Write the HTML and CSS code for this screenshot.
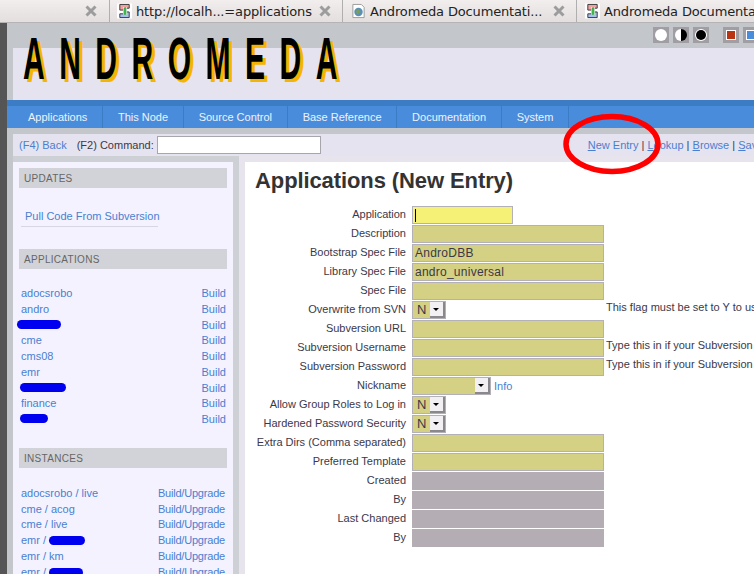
FILE: index.html
```html
<!DOCTYPE html>
<html lang="en">
<head>
    <meta charset="UTF-8">
    <title>Applications (New Entry)</title>
    <link rel="stylesheet" href="styles.css">
</head>
<body>
    <div class="tabstrip">
        <div class="tab tab-first">
            <svg class="tab-close" viewBox="0 0 12 12"><path d="M1.5 1.5l9 9M10.5 1.5l-9 9"/></svg>
        </div>
        <div class="tab tab-app">
            <svg class="favicon" viewBox="0 0 16 16"><rect width="16" height="16" fill="#fff"/><path d="M3 1h10v4H8v2H3z" fill="#f2a0a0" stroke="#333"/><path d="M13 15H3v-4h5V9h5z" fill="#a8c0f0" stroke="#333"/><path d="M7 4v8M10 4v8" fill="none" stroke="#fff"/><rect x="7" y="5" width="3" height="7" fill="#3fb54a"/></svg>
            <span class="tab-title">http://localh...=applications</span>
            <svg class="tab-close" viewBox="0 0 12 12"><path d="M1.5 1.5l9 9M10.5 1.5l-9 9"/></svg>
        </div>
        <div class="tab tab-doc">
            <svg class="favicon" viewBox="0 0 16 16"><path d="M2 1h9l3 3v11H2z" fill="#fff" stroke="#999"/><circle cx="8" cy="9" r="4.5" fill="#5a8fb8"/><path d="M5 8l3-2 2 3-3 3z" fill="#7aa050"/></svg>
            <span class="tab-title">Andromeda Documentati...</span>
            <svg class="tab-close" viewBox="0 0 12 12"><path d="M1.5 1.5l9 9M10.5 1.5l-9 9"/></svg>
        </div>
        <div class="tab tab-last">
            <svg class="favicon" viewBox="0 0 16 16"><rect width="16" height="16" fill="#fff"/><path d="M3 1h10v4H8v2H3z" fill="#f2a0a0" stroke="#333"/><path d="M13 15H3v-4h5V9h5z" fill="#a8c0f0" stroke="#333"/><path d="M7 4v8M10 4v8" fill="none" stroke="#fff"/><rect x="7" y="5" width="3" height="7" fill="#3fb54a"/></svg>
            <span class="tab-title">Andromeda Documenta</span>
        </div>
    </div>

    <div class="pagina">
        <div class="cabecera">
            <div class="franja">
                <span class="muestra"><i class="punto punto-blanco"></i></span>
                <span class="muestra"><i class="punto punto-medio"></i></span>
                <span class="muestra"><i class="punto punto-negro"></i></span>
                <span class="muestra muestra-sep"><i class="cuadro cuadro-rojo"></i></span>
                <span class="muestra"><i class="cuadro cuadro-azul"></i></span>
            </div>
            <div class="logo-fondo"></div>
            <div class="logo">ANDROMEDA</div>
        </div>

        <nav class="menu">
            <a>Applications</a>
            <a>This Node</a>
            <a>Source Control</a>
            <a>Base Reference</a>
            <a>Documentation</a>
            <a>System</a>
        </nav>

        <div class="comandos">
            <a class="enlace">(F4) Back</a>
            <span class="cmd-label">(F2) Command:</span>
            <input class="cmd-input" type="text">
            <div class="acciones">
                <a class="enlace"><u>N</u>ew Entry</a> |
                <a class="enlace"><u>L</u>ookup</a> |
                <a class="enlace"><u>B</u>rowse</a> |
                <a class="enlace"><u>S</u>ave</a>
            </div>
        </div>

        <div class="cuerpo">
            <aside class="lateral">
                <div class="panel">
                    <h3>UPDATES</h3>
                    <div class="pull"><a class="enlace">Pull Code From Subversion</a></div>

                    <h3>APPLICATIONS</h3>
                    <ul class="lista">
                        <li><a class="enlace">adocsrobo</a><a class="enlace">Build</a></li>
                        <li><a class="enlace">andro</a><a class="enlace">Build</a></li>
                        <li><span class="borron borron-a"></span><a class="enlace">Build</a></li>
                        <li><a class="enlace">cme</a><a class="enlace">Build</a></li>
                        <li><a class="enlace">cms08</a><a class="enlace">Build</a></li>
                        <li><a class="enlace">emr</a><a class="enlace">Build</a></li>
                        <li><span class="borron borron-b"></span><a class="enlace">Build</a></li>
                        <li><a class="enlace">finance</a><a class="enlace">Build</a></li>
                        <li><span class="borron borron-c"></span><a class="enlace">Build</a></li>
                    </ul>

                    <h3>INSTANCES</h3>
                    <ul class="lista lista-inst">
                        <li><a class="enlace">adocsrobo / live</a><a class="enlace">Build/Upgrade</a></li>
                        <li><a class="enlace">cme / acog</a><a class="enlace">Build/Upgrade</a></li>
                        <li><a class="enlace">cme / live</a><a class="enlace">Build/Upgrade</a></li>
                        <li><a class="enlace">emr / <span class="borron borron-d"></span></a><a class="enlace">Build/Upgrade</a></li>
                        <li><a class="enlace">emr / km</a><a class="enlace">Build/Upgrade</a></li>
                        <li><a class="enlace">emr / <span class="borron borron-e"></span></a><a class="enlace">Build/Upgrade</a></li>
                    </ul>
                </div>
            </aside>

            <main class="contenido">
                <h1>Applications (New Entry)</h1>
                <form class="ficha">
                    <label>Application</label>
                    <div class="fila"><span class="activo"><input class="campo campo-foco" type="text"><i class="cursor"></i></span></div>

                    <label>Description</label>
                    <div class="fila"><input class="campo" type="text"></div>

                    <label>Bootstrap Spec File</label>
                    <div class="fila"><input class="campo" type="text" value="AndroDBB"></div>

                    <label>Library Spec File</label>
                    <div class="fila"><input class="campo" type="text" value="andro_universal"></div>

                    <label>Spec File</label>
                    <div class="fila"><input class="campo" type="text"></div>

                    <label>Overwrite from SVN</label>
                    <div class="fila">
                        <span class="combo"><span class="combo-valor">N</span><span class="combo-boton"></span></span>
                        <span class="nota nota-sn">This flag must be set to Y to use</span>
                    </div>

                    <label>Subversion URL</label>
                    <div class="fila"><input class="campo" type="text"></div>

                    <label>Subversion Username</label>
                    <div class="fila"><input class="campo" type="text"><span class="nota">Type this in if your Subversion</span></div>

                    <label>Subversion Password</label>
                    <div class="fila"><input class="campo" type="text"><span class="nota">Type this in if your Subversion</span></div>

                    <label>Nickname</label>
                    <div class="fila">
                        <span class="combo combo-ancho"><span class="combo-valor"></span><span class="combo-boton"></span></span>
                        <a class="enlace info">Info</a>
                    </div>

                    <label>Allow Group Roles to Log in</label>
                    <div class="fila"><span class="combo"><span class="combo-valor">N</span><span class="combo-boton"></span></span></div>

                    <label>Hardened Password Security</label>
                    <div class="fila"><span class="combo"><span class="combo-valor">N</span><span class="combo-boton"></span></span></div>

                    <label>Extra Dirs (Comma separated)</label>
                    <div class="fila"><input class="campo" type="text"></div>

                    <label>Preferred Template</label>
                    <div class="fila"><input class="campo" type="text"></div>

                    <label>Created</label>
                    <div class="fila"><input class="campo campo-solo" type="text" readonly></div>

                    <label>By</label>
                    <div class="fila"><input class="campo campo-solo" type="text" readonly></div>

                    <label>Last Changed</label>
                    <div class="fila"><input class="campo campo-solo" type="text" readonly></div>

                    <label>By</label>
                    <div class="fila"><input class="campo campo-solo" type="text" readonly></div>
                </form>
            </main>
        </div>

        <svg class="circulo" viewBox="0 0 100 62"><ellipse cx="50" cy="31" rx="46" ry="27.5" fill="none" stroke="#f00" stroke-width="5.5"/></svg>
    </div>
</body>
</html>
```

FILE: styles.css
```css
html, body {
    margin: 0;
    height: 574px;
    overflow: hidden;
}

body {
    font-family: 'Liberation Sans', Arial, sans-serif;
    font-size: 11px;
    color: #3c3848;
    background: #fff;
}

a {
    text-decoration: none;
}

.enlace {
    color: #4a7fcf;
}

.tabstrip {
    display: flex;
    height: 22px;
    background: linear-gradient(#f2eeee, #e4dede);
    border-bottom: 1px solid #b4b4b4;
    font-family: 'DejaVu Sans', sans-serif;
    font-size: 13px;
    letter-spacing: -0.15px;
    color: #222;
}

.tab {
    display: flex;
    align-items: center;
    flex: none;
    box-sizing: border-box;
    border-right: 1px solid #b0aeae;
    white-space: nowrap;
}

.tab-first {
    width: 110px;
    justify-content: flex-end;
    padding-right: 12px;
}

.tab-app {
    width: 233px;
    padding-left: 7px;
}

.tab-doc {
    width: 234px;
    padding-left: 8px;
}

.tab-last {
    width: 177px;
    padding-left: 8px;
    border-right: 0;
}

.favicon {
    width: 15px;
    height: 16px;
    flex: none;
    margin-right: 4px;
}

.tab-title {
    flex: 1;
}

.tab-close {
    width: 12px;
    height: 12px;
    flex: none;
    margin-right: 11px;
    fill: none;
    stroke: #9c9c9c;
    stroke-width: 3;
}

.tab-first .tab-close {
    margin: 0;
}

.pagina {
    position: relative;
    height: 551px;
    padding-left: 7px;
    background: linear-gradient(90deg, #555 0, #555 7px, #c3c7cb 7px);
    overflow: hidden;
}

.cabecera {
    position: relative;
    height: 77px;
}

.franja {
    display: flex;
    gap: 4px;
    height: 25px;
    padding: 4px 0 0 646px;
    box-sizing: border-box;
}

.muestra {
    display: flex;
    align-items: center;
    justify-content: center;
    flex: none;
    width: 16px;
    height: 16px;
    background: #a09ea2;
}

.muestra-sep {
    margin-left: 10px;
}

.punto {
    display: block;
    width: 12px;
    height: 12px;
    border-radius: 50%;
}

.punto-blanco {
    background: #fff;
}

.punto-medio {
    background: linear-gradient(90deg, #fff 50%, #000 50%);
}

.punto-negro {
    width: 10px;
    height: 10px;
    background: #000;
    box-shadow: 0 0 0 1px #fff;
}

.cuadro {
    display: block;
    width: 8px;
    height: 8px;
    border: 1px solid #fff;
}

.cuadro-rojo {
    background: #b93412;
}

.cuadro-azul {
    background: #4a8cdc;
}

.logo-fondo {
    height: 52px;
    margin-left: 6px;
    background: #e6e3f0;
}

.logo {
    position: absolute;
    left: 16px;
    top: 7px;
    color: #000;
    font-size: 60px;
    font-weight: bold;
    line-height: 58px;
    letter-spacing: 29px;
    white-space: nowrap;
    text-shadow: 7px 3px 0 #f5b400;
    transform: scaleX(0.5);
    transform-origin: left top;
}

.menu {
    display: flex;
    height: 22px;
    padding-left: 6px;
    background: #4a8cdc;
    border-top: 6px solid #3c7cc4;
}

.menu a {
    padding: 0 14.6px 0 15px;
    line-height: 22px;
    color: #eef2fa;
    border-right: 1px solid #3c7cc4;
}

.comandos {
    display: flex;
    align-items: center;
    height: 22px;
    margin: 6px 0 0 6px;
    padding-left: 6px;
    background: #e6e3f0;
    white-space: nowrap;
}

.cmd-label {
    margin-left: 10px;
    color: #3c3848;
}

.cmd-input {
    width: 162px;
    height: 16px;
    margin: 0 0 0 3px;
    padding: 0;
    border: 1px solid #a8a6ac;
    background: #fff;
    box-sizing: content-box;
}

.acciones {
    margin-left: 267px;
    color: #3c3848;
}

.cuerpo {
    display: flex;
    margin-left: 6px;
    height: 418px;
    background: #e8e4ee;
}

.lateral {
    width: 226px;
    flex: none;
    padding: 6px 6px 0 0;
    box-sizing: border-box;
    background: #cdd0d4;
}

.panel {
    height: 100%;
    box-sizing: border-box;
    padding: 6px;
    background: #f4f2ff;
}

.panel h3 {
    margin: 0;
    height: 20px;
    padding-left: 5px;
    line-height: 21px;
    font-size: 10px;
    font-weight: normal;
    color: #666;
    letter-spacing: 0.3px;
    background: #d2d3d8;
}

.pull {
    width: 137px;
    margin: 21px 0 22px 2px;
    padding: 0 0 2px 4px;
    box-sizing: border-box;
    line-height: 15px;
    white-space: nowrap;
    border-bottom: 1px solid #d8d6e2;
}

.lista {
    list-style: none;
    margin: 16px 0 21px;
    padding: 0 1px 0 2px;
}

.lista li {
    display: flex;
    justify-content: space-between;
    height: 15.75px;
    line-height: 16px;
}

.lista-inst {
    margin-top: 17px;
}

.lista-inst li {
    padding-right: 1px;
}

.lista-inst a + a {
    letter-spacing: -0.2px;
}

.borron {
    display: inline-block;
    height: 9px;
    background: #0000f0;
    border-radius: 5px;
    vertical-align: -1px;
}

.borron-a {
    width: 44px;
    margin: 3px 0 0 -4px;
}

.borron-b {
    width: 46px;
    margin: 3px 0 0 -1px;
}

.borron-c {
    width: 28px;
    margin: 3px 0 0 -1px;
}

.borron-d {
    width: 36px;
}

.borron-e {
    width: 34px;
}

.contenido {
    flex: 1;
    margin: 6px 0 0 6px;
    padding: 6px 0 0 10px;
    background: #fff;
    overflow: hidden;
    box-sizing: border-box;
    white-space: nowrap;
}

.contenido h1 {
    margin: 0 0 12px;
    font-size: 22px;
    line-height: 26px;
    letter-spacing: -0.1px;
    color: #333;
}

.ficha {
    display: grid;
    grid-template-columns: 151px 1fr;
    column-gap: 6px;
    row-gap: 1px;
}

.ficha label {
    text-align: right;
    line-height: 16px;
}

.fila {
    display: flex;
    align-items: flex-start;
    height: 18px;
}

.campo {
    display: block;
    width: 192px;
    height: 18px;
    margin: 0;
    padding: 0 2px;
    box-sizing: border-box;
    border: 1px solid #b4b0b8;
    border-radius: 0;
    outline: 0;
    background: #d4d084;
    font-family: inherit;
    font-size: 12px;
    letter-spacing: 0.25px;
    color: #3c3848;
}

.campo-foco {
    width: 101px;
    background: #f5f076;
}

.campo-solo {
    height: 19px;
    border-color: #fff;
    border-width: 0 0 1px;
    background: #b4aeb4;
}

.activo {
    position: relative;
    display: block;
}

.cursor {
    position: absolute;
    left: 3px;
    top: 3px;
    width: 1px;
    height: 13px;
    background: #000;
}

.nota {
    margin-left: 2px;
    line-height: 12px;
}

.nota-sn {
    margin-left: 160px;
}

.combo {
    display: flex;
    flex: none;
    width: 34px;
    height: 18px;
    box-sizing: border-box;
    border: 1px solid #b4b0b8;
    background: #d4d084;
}

.combo-valor {
    flex: 1;
    padding-left: 4px;
    font-size: 13px;
    line-height: 16px;
}

.combo-boton {
    position: relative;
    width: 15px;
    box-sizing: border-box;
    background: #f2f0f2;
    border-right: 2px solid #8a888a;
    border-bottom: 2px solid #8a888a;
}

.combo-boton::after {
    content: "";
    position: absolute;
    left: 3px;
    top: 6px;
    border-left: 3px solid transparent;
    border-right: 3px solid transparent;
    border-top: 3px solid #000;
}

.combo-ancho {
    width: 79px;
}

.info {
    margin-left: 3px;
    line-height: 18px;
}

.circulo {
    position: absolute;
    left: 562px;
    top: 90px;
    width: 100px;
    height: 62px;
    pointer-events: none;
}
```
